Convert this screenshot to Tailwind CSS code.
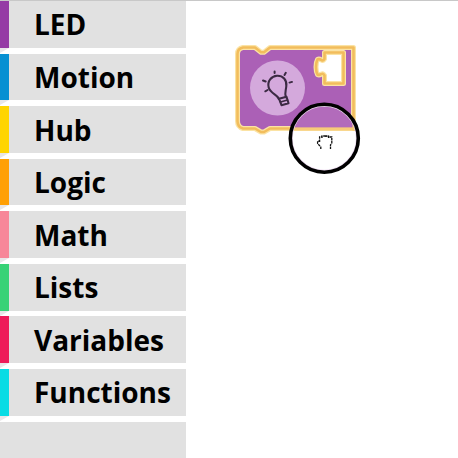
<!DOCTYPE html>
<html lang="en">
<head>
<meta charset="utf-8">
<title>Blocks</title>
<script src="https://cdn.jsdelivr.net/npm/@tailwindcss/browser@4"></script>
</head>
<body class="bg-white overflow-hidden">
<div class="relative flex w-[458px] h-[458px] overflow-hidden bg-white border-t border-[#c8c8c8] font-['Open_Sans','Noto_Sans',sans-serif] text-[28px] font-bold text-black">
  <nav id="menu" class="flex flex-col w-[186px] shrink-0 gap-[5.9px]"></nav>
  <main class="relative flex-1">
    <svg class="absolute left-0 -top-px" width="272" height="458" viewBox="186 0 272 458" fill="none">
      <defs>
        <path id="block" fill-rule="evenodd" d="M243 47.5H255L261 52.3H264L270 47.5H353.5V128.5H270L264 132H261L255 128.5H243Q237.5 127 237.5 121V54Q237.5 48.500 243 47.500ZM324.500 52.500H343.500V83.500H324.500V75.500C322 71 321 76.500 317.500 74.500C315.500 71 315.500 63 317.500 59.500C321 57.500 322 63 324.500 59Z"/>
        <clipPath id="lens"><circle cx="324.300" cy="138.300" r="33"/></clipPath>
      </defs>
      <use href="#block" fill="#ab60b6" stroke="#fbe3a4" stroke-width="5" stroke-linejoin="round"/>
      <use href="#block" stroke="#f2bd5c" stroke-width="2.600" stroke-linejoin="round"/>
      <circle cx="277.500" cy="88" r="27.500" fill="#d4a9dc"/>
      <g stroke="#3b2a43" stroke-width="2.100" stroke-linecap="round" stroke-linejoin="round">
        <path d="M278.800 99C278 94.500 270.500 94 268.700 87.500C267 81 271.500 76 277 75.700C283 75.400 287 80 286.300 86C286 90.500 284.500 92.500 285.800 97"/>
        <path d="M279 98.700L286.500 96.800L288.500 103.300L281.500 105.200Z"/>
        <path d="M280.500 102L287.500 100" stroke-width="1.700"/>
        <path d="M274.600 71.500V72.900M285.800 72.800L284.500 75M263 80.500L265.700 81.500M265.300 91.300L267.600 90M289.500 82.600L292 81.900" stroke-width="2"/>
      </g>
      <g clip-path="url(#lens)">
        <path d="M291 103H353V127.800H291Z" fill="#b26bbb"/>
        <path d="M291 129H358" stroke="#f7cb79" stroke-width="3"/>
        <path d="M354 103V131" stroke="#f7cb79" stroke-width="3"/>
      </g>
      <circle cx="324.300" cy="138.300" r="32.300" stroke="#ead7ee" stroke-width="1.500"/>
      <circle cx="324.300" cy="138.300" r="34" stroke="#000" stroke-width="3.600"/>
      <path d="M320.800 149V147L317.600 143.500V141.200H319.600M319.600 142V136.900H321.500M322 138V136H325V137.500M326 137V136H328.500V138M329.500 137H331.800V143L330.500 145V149" stroke="#111" stroke-width="1.300" stroke-dasharray="2.500 .7"/>
    </svg>
  </main>
</div>
<script>
const rows = [["LED","#953ba5"],["Motion","#0790d2"],["Hub","#ffd500"],["Logic","#ffa005"],["Math","#f78799"],["Lists","#37d276"],["Variables","#ee1b59"],["Functions","#08dce4"],["",""]];
document.getElementById("menu").innerHTML = rows.map(([name, color], i) => `
  <div class="relative flex h-[46.700px] w-full shrink-0 items-center bg-[#e1e1e1] ${name ? "" : "border-l border-[#e1e1e1]"}">
    ${name ? `<span class="h-full w-[9px] shrink-0" style="background:${color}"></span><span class="pl-[25px] leading-none whitespace-nowrap">${name}</span>
    <svg class="absolute left-0 top-full" width="9" height="5" viewBox="0 0 9 5"><path d="M0 0H9L0 5Z" fill="#e8e6e8"/></svg>` : ""}
  </div>`).join("");
</script>
</body>
</html>
